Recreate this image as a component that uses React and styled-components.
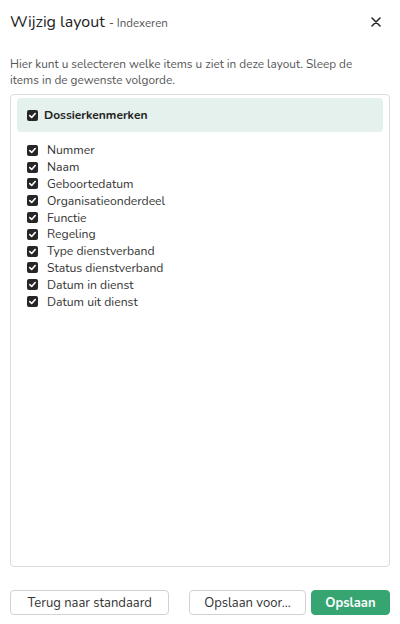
import React from 'react';
import styled, { createGlobalStyle } from 'styled-components';

const GlobalStyle = createGlobalStyle`
  html, body {
    margin: 0;
    padding: 0;
    background: #fff;
  }
  body {
    font-family: "Nunito", "Lato", "Noto Sans", sans-serif;
    color: #222;
  }
`;

const items = [
  'Nummer',
  'Naam',
  'Geboortedatum',
  'Organisatieonderdeel',
  'Functie',
  'Regeling',
  'Type dienstverband',
  'Status dienstverband',
  'Datum in dienst',
  'Datum uit dienst',
];

const Check = () => (
  <Box>
    <svg width="9" height="9" viewBox="0 0 10 10">
      <path d="M2 5.2 L4.1 7.2 L8 2.8" fill="none" stroke="#fff" strokeWidth="1.8" strokeLinecap="round" strokeLinejoin="round" />
    </svg>
  </Box>
);

const App = () => {
  return (
    <Page>
      <GlobalStyle />
      <Header>
        <Title>
          Wijzig layout <Sub>- Indexeren</Sub>
        </Title>
        <Close aria-label="Sluiten">
          <svg width="10" height="10" viewBox="0 0 10 10">
            <path d="M1 1 L9 9 M9 1 L1 9" stroke="#222" strokeWidth="1.5" strokeLinecap="round" />
          </svg>
        </Close>
      </Header>
      <Intro>
        Hier kunt u selecteren welke items u ziet in deze layout. Sleep de items in de gewenste volgorde.
      </Intro>
      <Panel>
        <Group>
          <Check />
          <GroupLabel>Dossierkenmerken</GroupLabel>
        </Group>
        <List>
          {items.map(item => (
            <Item key={item}>
              <Check />
              <span>{item}</span>
            </Item>
          ))}
        </List>
      </Panel>
      <Footer>
        <Button pad={16.5}>Terug naar standaard</Button>
        <Spacer />
        <Button pad={14}>Opslaan voor...</Button>
        <Button primary pad={13.5}>Opslaan</Button>
      </Footer>
    </Page>
  );
};

const Page = styled.div`
  display: flex;
  flex-direction: column;
  box-sizing: border-box;
  height: 624px;
  padding: 0 10px 9px 10px;
`;

const Header = styled.div`
  display: flex;
  align-items: center;
  justify-content: space-between;
  height: 44px;
`;

const Title = styled.div`
  font-size: 16px;
  color: #222;
`;

const Sub = styled.span`
  font-size: 11.5px;
  color: #555;
`;

const Close = styled.button`
  display: flex;
  align-items: center;
  justify-content: center;
  width: 20px;
  height: 20px;
  margin-right: 4px;
  padding: 0;
  border: none;
  background: none;
`;

const Intro = styled.p`
  max-width: 352px;
  margin: 12px 0 6px 0;
  font-size: 11.8px;
  line-height: 16px;
  color: #555;
`;

const Panel = styled.div`
  flex: 1;
  border: 1px solid #dcdcdc;
  border-radius: 4px;
  padding: 3px 6px;
`;

const Group = styled.div`
  display: flex;
  align-items: center;
  gap: 6px;
  height: 34px;
  padding-left: 10px;
  border-radius: 4px;
  background: #e5f1ec;
`;

const GroupLabel = styled.span`
  font-size: 12px;
  font-weight: 700;
  color: #222;
`;

const List = styled.div`
  display: flex;
  flex-direction: column;
  padding: 10px 0 0 10px;
`;

const Item = styled.div`
  display: flex;
  align-items: center;
  gap: 9px;
  height: 16.8px;
  font-size: 12.2px;
  color: #333;
`;

const Box = styled.span`
  display: inline-flex;
  align-items: center;
  justify-content: center;
  width: 11px;
  height: 11px;
  border-radius: 2px;
  background: #262626;
  flex-shrink: 0;
`;

const Footer = styled.div`
  display: flex;
  align-items: center;
  gap: 5px;
  margin-top: 23px;
`;

const Spacer = styled.div`
  flex: 1;
`;

const Button = styled.button`
  height: 25px;
  padding: 0 ${p => p.pad}px;
  border: 1px solid ${p => (p.primary ? '#36a572' : '#d2d2d2')};
  border-radius: 4px;
  background: ${p => (p.primary ? '#36a572' : '#fff')};
  color: ${p => (p.primary ? '#fff' : '#333')};
  font-family: inherit;
  font-size: 13px;
  font-weight: ${p => (p.primary ? 700 : 400)};
`;

export default App;
